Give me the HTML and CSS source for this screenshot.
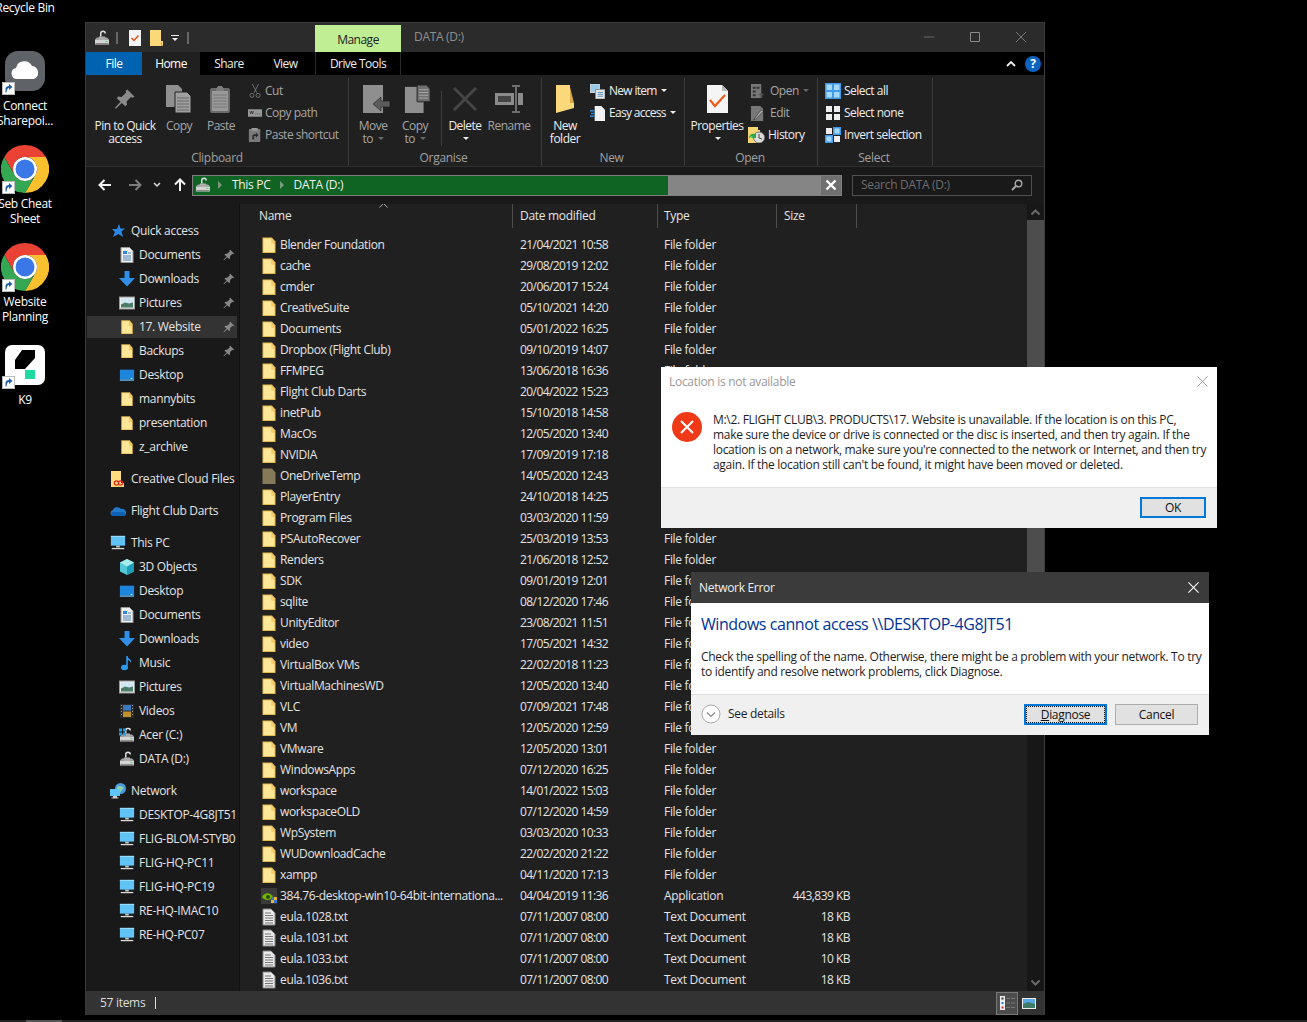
FILE: index.html
```html
<!DOCTYPE html>
<html lang="en">
<head>
<meta charset="utf-8">
<title>DATA (D:)</title>
<link rel="stylesheet" href="styles.css">
</head>
<body>
<svg class="defs" aria-hidden="true">
  <symbol id="folder" viewBox="0 0 14 18"><path d="M.5 1.500h9.500l3.500 4v11.500H.5z" fill="#e6b94f"/><path d="M1.500 2.500h8v5h3v8.500H1.500z" fill="#fee797"/><path d="M10 3l2.500 3v1H10z" fill="#f3cf72"/></symbol>
  <symbol id="folder-dim" viewBox="0 0 14 18"><path d="M.5 1.500h9.500l3.500 4v11.500H.5z" fill="#85795a"/></symbol>
  <symbol id="txt" viewBox="0 0 14 18"><path d="M1 1h8l4 4v12H1z" fill="#e8e8e8" stroke="#888"/><path d="M3 5h6M3 7.500h8M3 10h8M3 12.500h8M3 15h8" stroke="#777"/></symbol>
  <symbol id="monitor" viewBox="0 0 18 16"><rect x="1" y="0" width="16" height="11" fill="#5fc3f5"/><rect x="1" y="0" width="16" height="1" fill="#a9e2fb"/><path d="M7 11h4v2H7z" fill="#c8c8c8"/><path d="M2 13.500h14V15H2z" fill="#dcdcdc"/></symbol>
  <symbol id="desk" viewBox="0 0 18 14"><rect x="1" y="1" width="16" height="11" fill="#1d86dc"/><path d="M1 12h16v1.500H1z" fill="#67b8f3"/><path d="M13 10.500h2v1h-2z" fill="#d7eefc"/></symbol>
  <symbol id="pin" viewBox="0 0 24 24"><path d="M14.500 1.500l8 8-2.500 1-1.500-.8-4.700 5 .4 3.700-2 1.600-3.700-3.700-6.500 6.200-1-1 6.200-6.500L3 11.300l1.600-2 3.700.4 5-4.700-.8-1.500z"/></symbol>
  <symbol id="docs" viewBox="0 0 14 16"><path d="M1 .5h8.500L13 4v11.500H1z" fill="#eee" stroke="#999"/><path d="M3 4h4v3H3z" fill="#2b88d8"/><path d="M8 6h3M3 9h8M3 11h8M3 13h8" stroke="#4a86b8"/></symbol>
  <symbol id="down" viewBox="0 0 16 16"><path d="M5.500 0h5v7H16l-8 8.500L0 7h5.500z" fill="#2f8fe6"/></symbol>
  <symbol id="pics" viewBox="0 0 16 13"><rect x=".5" y=".5" width="15" height="12" fill="#ececec" stroke="#999"/><rect x="2" y="2" width="12" height="9" fill="#cfe6f5"/><path d="M2 8l4-2 4 1 4-1v5H2z" fill="#4d7d66"/></symbol>
  <symbol id="drive" viewBox="0 0 16 15"><path d="M6 6V3a3 3 0 0 1 6 0h-1.500a1.500 1.500 0 0 0-3 0v3z" fill="#ddd"/><path d="M5 6h6v3H5z" fill="#b9b9b9"/><path d="M1 9l2-2h10l2 2z" fill="#a9a9a9"/><rect x="1" y="9" width="14" height="5" fill="#d4d4d4"/><rect x="1.500" y="12.500" width="13" height="1" fill="#888"/><rect x="11.500" y="10.500" width="2" height="1" fill="#55d36b"/></symbol>
  <symbol id="short" viewBox="0 0 13 13"><rect x=".5" y=".5" width="12" height="12" fill="#fff" stroke="#bbb"/><path d="M3.500 10.500V7c0-2 1.500-3 3.500-3V2l3.500 3L7 8V6C5.500 6 5 7 4.500 10.500z" fill="#1f5fa8"/></symbol>
  <symbol id="chrome" viewBox="0 0 48 48"><path d="M24 0A24 24 0 0 1 44.800 12H24A12 12 0 0 0 13.600 30L3.200 12A24 24 0 0 1 24 0z" fill="#ea4335"/><path d="M44.800 12A24 24 0 0 1 24 48L34.400 30A12 12 0 0 0 24 12z" fill="#fbc02d"/><path d="M3.200 12L13.600 30A12 12 0 0 0 34.400 30L24 48A24 24 0 0 1 3.200 12z" fill="#34a853"/><circle cx="24" cy="24" r="12" fill="#fff"/><circle cx="24" cy="24" r="9.500" fill="#3b78e7"/></symbol>
  <symbol id="sel" viewBox="0 0 16 16"><rect width="16" height="16" fill="#3f9be8"/><rect x="1.500" y="1.500" width="5.500" height="5.500" fill="#a6d8fb"/><rect x="9" y="1.500" width="5.500" height="5.500" fill="#a6d8fb"/><rect x="1.500" y="9" width="5.500" height="5.500" fill="#a6d8fb"/><rect x="9" y="9" width="5.500" height="5.500" fill="#a6d8fb"/></symbol>
</svg>

<main class="desktop">
  <div class="shortcut shortcut-recycle"><span>Recycle Bin</span></div>
  <div class="shortcut shortcut-connect">
    <div class="app">
      <svg class="app-icon" viewBox="0 0 40 40"><rect width="40" height="40" rx="13" fill="#5f6368"/><path d="M12 28a5.500 5.500 0 0 1-1-10.900A8.500 8.500 0 0 1 27 15a6.800 6.800 0 0 1 2 13z" fill="#fff"/></svg>
      <svg class="short-badge"><use href="#short"/></svg>
    </div>
    <span>Connect<br>Sharepoi...</span>
  </div>
  <div class="shortcut shortcut-seb">
    <div class="app app-wide"><svg class="app-icon-wide"><use href="#chrome"/></svg><svg class="short-badge"><use href="#short"/></svg></div>
    <span>Seb Cheat<br>Sheet</span>
  </div>
  <div class="shortcut shortcut-web">
    <div class="app app-wide"><svg class="app-icon-wide"><use href="#chrome"/></svg><svg class="short-badge"><use href="#short"/></svg></div>
    <span>Website<br>Planning</span>
  </div>
  <div class="shortcut shortcut-k9">
    <div class="app">
      <svg class="app-icon" viewBox="0 0 40 40"><rect width="40" height="40" rx="7" fill="#fff"/><path d="M10 15L17 5h13v8L20 24H10z" fill="#000"/><rect x="20" y="25" width="10" height="9" fill="#1ed9a0"/></svg>
      <svg class="short-badge"><use href="#short"/></svg>
    </div>
    <span>K9</span>
  </div>

  <section class="window">
    <header class="titlebar">
      <div class="qat">
        <svg class="ic16"><use href="#drive"/></svg>
        <i class="qat-sep"></i>
        <svg class="qat-note" viewBox="0 0 12 16"><path d="M0 0h12v16H0z" fill="#f4f4f4"/><path d="M2.500 8l2.500 2.500 4.500-5" fill="none" stroke="#e2531c" stroke-width="1.500"/></svg>
        <svg class="qat-folder" viewBox="0 0 13 16"><path d="M0 0h11v11h2v5H0z" fill="#fcd978"/><path d="M11 11l2 5h-2z" fill="#d7a53a"/></svg>
        <svg class="qat-drop" viewBox="0 0 8 8"><path d="M0 1h8v1H0zM1 4h6L4 7z" fill="#eee"/></svg>
        <i class="qat-sep qat-sep-end"></i>
      </div>
      <div class="manage">Manage</div>
      <div class="win-title">DATA (D:)</div>
      <div class="win-ctrls">
        <span class="ctrl"><svg class="ctrl-ic" viewBox="0 0 10 10"><path d="M0 5h10" stroke="#666"/></svg></span>
        <span class="ctrl"><svg class="ctrl-ic" viewBox="0 0 10 10"><path d="M.5.5h9v9h-9z" fill="none" stroke="#8a8a8a"/></svg></span>
        <span class="ctrl"><svg class="ctrl-ic" viewBox="0 0 10 10"><path d="M0 0l10 10M10 0L0 10" stroke="#777"/></svg></span>
      </div>
    </header>

    <nav class="tabs">
      <span class="tab tab-file">File</span>
      <span class="tab tab-home">Home</span>
      <span class="tab tab-share">Share</span>
      <span class="tab tab-view">View</span>
      <span class="tab tab-drive">Drive Tools</span>
      <svg class="tab-up" viewBox="0 0 10 6"><path d="M1 5l4-4 4 4" fill="none" stroke="#eee" stroke-width="1.800"/></svg>
      <span class="help">?</span>
    </nav>

    <div class="ribbon">
      <div class="rg rg-clip">
        <div class="rg-body">
          <div class="big big-pin"><span class="big-ic"><svg class="ic-pin"><use href="#pin"/></svg></span><span class="lit">Pin to Quick<br>access</span></div>
          <div class="big big-copy"><span class="big-ic"><svg class="ic-28" viewBox="0 0 26 28"><path d="M0 0h12l4 4v18H0z" fill="#8f8f8f"/><path d="M9 7h12l4 4v17H9z" fill="#a0a0a0" stroke="#202020"/><path d="M11 13h12M11 16h12M11 19h12M11 22h12M11 25h12" stroke="#666"/></svg></span><span>Copy</span></div>
          <div class="big big-paste"><span class="big-ic"><svg class="ic-28" viewBox="0 0 22 28"><rect y="3" width="20" height="25" rx="2" fill="#6a6a6a"/><rect x="2" y="6" width="16" height="20" fill="#999"/><path d="M3 10h14M3 13h14M3 16h14M3 19h14M3 22h14" stroke="#777"/><path d="M6 4l2-3h4l2 3v2H6z" fill="#7d7d7d"/></svg></span><span>Paste</span></div>
          <div class="smalls smalls-clip">
            <div class="small"><svg class="ic14" viewBox="0 0 14 16"><path d="M4 0l5 10M11 0L6 10" stroke="#777" fill="none"/><circle cx="3.500" cy="13" r="2.300" fill="none" stroke="#777"/><circle cx="10.500" cy="13" r="2.300" fill="none" stroke="#777"/></svg><span>Cut</span></div>
            <div class="small"><svg class="ic14" viewBox="0 0 15 10"><rect y="1" width="15" height="8" fill="#999"/><path d="M2 3l1 3 1-3 1 3 1-3M8 6h1M10 6h1M12 6h1" stroke="#333" fill="none" stroke-width=".8"/></svg><span>Copy path</span></div>
            <div class="small"><svg class="ic14" viewBox="0 0 14 16"><rect y="1" width="13" height="15" rx="1" fill="#7a7a7a"/><path d="M3 0h7v3H3z" fill="#999"/><path d="M4 13V9c0-1 1-2 2-2h2V5l3 3-3 3V9H6v4z" fill="#2a2a2a"/></svg><span>Paste shortcut</span></div>
          </div>
        </div>
        <div class="rg-label">Clipboard</div>
      </div>

      <div class="rg rg-org">
        <div class="rg-body">
          <div class="big big-move"><span class="big-ic"><svg class="ic-28" viewBox="0 0 28 28"><path d="M0 0h20v28H0z" fill="#8f8f8f"/><path d="M10 19l8-7v4h9v6h-9v4z" fill="#5b5b5b" stroke="#202020" stroke-width=".6"/></svg></span><span>Move<br>to <i class="caret caret-dim"></i></span></div>
          <div class="big big-copyto"><span class="big-ic"><svg class="ic-28" viewBox="0 0 28 30"><path d="M0 2h20v28H0z" fill="#8f8f8f"/><path d="M13 0h10l4 4v14H13z" fill="#6f6f6f" stroke="#202020"/><path d="M15 5h10M15 8h10M15 11h10M15 14h10" stroke="#aaa"/></svg></span><span>Copy<br>to <i class="caret caret-dim"></i></span></div>
          <i class="rg-inner-sep"></i>
          <div class="big big-del"><span class="big-ic"><svg class="ic-del" viewBox="0 0 24 24"><path d="M1 1l22 22M23 1L1 23" stroke="#454545" stroke-width="3"/></svg></span><span class="lit">Delete<br><i class="caret"></i></span></div>
          <div class="big big-ren"><span class="big-ic"><svg class="ic-ren" viewBox="0 0 28 28"><path d="M0 8h28v12H0z" fill="#8c8c8c"/><rect x="3" y="11" width="13" height="6" fill="#444"/><path d="M21 2v24" stroke="#202020" stroke-width="4"/><path d="M21 2v24M17 1h8M17 27h8" stroke="#888" stroke-width="1.500"/></svg></span><span>Rename</span></div>
        </div>
        <div class="rg-label">Organise</div>
      </div>

      <div class="rg rg-new">
        <div class="rg-body">
          <div class="big big-nf"><span class="big-ic"><svg class="ic-nf" viewBox="0 0 18 28"><path d="M0 0h14v18h4v5L0 28z" fill="#fbd97a"/><path d="M14 2v16h4z" fill="#d8aa47"/></svg></span><span class="lit">New<br>folder</span></div>
          <div class="smalls smalls-new">
            <div class="small small-lit"><svg class="ic15" viewBox="0 0 16 16"><rect width="10" height="9" fill="#9cc9e8" stroke="#ddd"/><rect x="6" y="6" width="10" height="10" fill="#eee" stroke="#888"/><path d="M8 9h6M8 11h6M8 13h6" stroke="#4a86b8"/></svg><span>New item <i class="caret"></i></span></div>
            <div class="small small-lit"><svg class="ic15" viewBox="0 0 16 16"><path d="M5 0h7l4 4v12H5z" fill="#f2f2f2"/><path d="M0 5h5M1 8h4M0 11h5" stroke="#2b88d8" stroke-width="1.500"/></svg><span>Easy access <i class="caret"></i></span></div>
          </div>
        </div>
        <div class="rg-label">New</div>
      </div>

      <div class="rg rg-open">
        <div class="rg-body">
          <div class="big big-prop"><span class="big-ic"><svg class="ic-prop" viewBox="0 0 21 28"><path d="M0 0h15l6 6v22H0z" fill="#f5f5f5"/><path d="M15 0l6 6h-6z" fill="#bbb"/><path d="M3 15l5 6 10-11" fill="none" stroke="#ea5a1e" stroke-width="2.200"/></svg></span><span class="lit">Properties<br><i class="caret"></i></span></div>
          <div class="smalls smalls-open">
            <div class="small"><svg class="ic15" viewBox="0 0 16 16"><rect x="1" width="11" height="15" fill="#777"/><path d="M3 3h3v2H3zM7 3h3v2H7zM3 7h3v2H3zM3 11h3v2H3z" fill="#333"/><path d="M9 12l3-3 3 3h-2v3h-2v-3z" fill="#555"/></svg><span>Open <i class="caret caret-dim"></i></span></div>
            <div class="small"><svg class="ic15" viewBox="0 0 16 16"><path d="M1 0h10l3 3v13H1z" fill="#777"/><path d="M12 4L5 13l-1 2 2-1 8-8z" fill="#aaa" stroke="#202020" stroke-width=".6"/></svg><span>Edit</span></div>
            <div class="small small-lit"><svg class="ic-hist" viewBox="0 0 17 16"><path d="M0 0h10v3h2v13H0z" fill="#f7d774"/><circle cx="11" cy="10.500" r="5.500" fill="#ddd" stroke="#777"/><path d="M11 7v4l3 1" stroke="#444" fill="none"/><path d="M1 10c1-3 4-4 6-3l1-1v5H3l1.500-1.500c-1-.5-2 0-2.500 2z" fill="#2ea84a"/></svg><span>History</span></div>
          </div>
        </div>
        <div class="rg-label">Open</div>
      </div>

      <div class="rg rg-sel">
        <div class="rg-body">
          <div class="smalls smalls-sel">
            <div class="small small-lit"><svg class="ic16"><use href="#sel"/></svg><span>Select all</span></div>
            <div class="small small-lit"><svg class="ic16" viewBox="0 0 16 16"><path d="M1 1h6v6H1zM9 1h6v6H9zM1 9h6v6H1zM9 9h6v6H9z" fill="#eee"/></svg><span>Select none</span></div>
            <div class="small small-lit"><svg class="ic16" viewBox="0 0 16 16"><path d="M1 1h6v6H1zM9 9h6v6H9z" fill="#eee"/><rect x="8" width="8" height="8" fill="#3f9be8"/><rect x="9.500" y="1.500" width="5" height="5" fill="#a6d8fb"/><rect y="8" width="8" height="8" fill="#3f9be8"/><rect x="1.500" y="9.500" width="5" height="5" fill="#a6d8fb"/></svg><span>Invert selection</span></div>
          </div>
        </div>
        <div class="rg-label">Select</div>
      </div>
    </div>

    <div class="addrrow">
      <svg class="nav-back" viewBox="0 0 14 12"><path d="M13 6H2M6.500 1L1.500 6l5 5" fill="none" stroke="#f2f2f2" stroke-width="2"/></svg>
      <svg class="nav-fwd" viewBox="0 0 14 12"><path d="M1 6h11M7.500 1l5 5-5 5" fill="none" stroke="#7d7d7d" stroke-width="2"/></svg>
      <svg class="nav-drop" viewBox="0 0 8 6"><path d="M1 1l3 3 3-3" fill="none" stroke="#ddd" stroke-width="1.500"/></svg>
      <svg class="nav-up" viewBox="0 0 12 14"><path d="M6 13V2M1 6.500l5-5 5 5" fill="none" stroke="#f2f2f2" stroke-width="2"/></svg>
      <div class="addr">
        <div class="addr-fill">
          <svg class="ic16"><use href="#drive"/></svg>
          <i class="crumb-sep"></i><span class="crumb">This PC</span>
          <i class="crumb-sep"></i><span class="crumb">DATA (D:)</span>
        </div>
        <div class="addr-rest"></div>
        <div class="addr-x"><svg class="addr-x-ic" viewBox="0 0 12 12"><path d="M1.500 1.500l9 9M10.500 1.500l-9 9" stroke="#fff" stroke-width="2.400"/></svg></div>
      </div>
      <div class="search"><span>Search DATA (D:)</span><svg class="search-ic" viewBox="0 0 12 12"><circle cx="7.500" cy="4.500" r="3.300" fill="none" stroke="#aaa" stroke-width="1.400"/><path d="M5 7l-4 4" stroke="#aaa" stroke-width="1.800"/></svg></div>
    </div>

    <div class="main">
      <aside class="side">
        <div class="sgroup">
          <div class="srow"><svg class="sic-root" viewBox="0 0 16 16"><path d="M9 1l1.500 4.500H15L11.500 8.500 13 14 8.500 11 3 14l2-5L2 6h5z" fill="#2b88e6"/></svg><span>Quick access</span></div>
          <div class="srow srow-c"><svg class="sic"><use href="#docs"/></svg><span>Documents</span><svg class="spin"><use href="#pin"/></svg></div>
          <div class="srow srow-c"><svg class="sic"><use href="#down"/></svg><span>Downloads</span><svg class="spin"><use href="#pin"/></svg></div>
          <div class="srow srow-c"><svg class="sic"><use href="#pics"/></svg><span>Pictures</span><svg class="spin"><use href="#pin"/></svg></div>
          <div class="srow srow-c srow-sel"><svg class="sic"><use href="#folder"/></svg><span>17. Website</span><svg class="spin"><use href="#pin"/></svg></div>
          <div class="srow srow-c"><svg class="sic"><use href="#folder"/></svg><span>Backups</span><svg class="spin"><use href="#pin"/></svg></div>
          <div class="srow srow-c"><svg class="sic"><use href="#desk"/></svg><span>Desktop</span></div>
          <div class="srow srow-c"><svg class="sic"><use href="#folder"/></svg><span>mannybits</span></div>
          <div class="srow srow-c"><svg class="sic"><use href="#folder"/></svg><span>presentation</span></div>
          <div class="srow srow-c"><svg class="sic"><use href="#folder"/></svg><span>z_archive</span></div>
        </div>
        <div class="sgroup">
          <div class="srow"><svg class="sic-root" viewBox="0 0 16 16"><path d="M1 0h10v12h3v4H1z" fill="#fcdc7e"/><circle cx="6.500" cy="12" r="2.200" fill="none" stroke="#e0261b" stroke-width="1.200"/><circle cx="10.500" cy="12" r="2.200" fill="none" stroke="#e0261b" stroke-width="1.200"/></svg><span>Creative Cloud Files</span></div>
        </div>
        <div class="sgroup">
          <div class="srow"><svg class="sic-root" viewBox="0 0 16 12"><path d="M3 11a3 3 0 0 1-.5-5.800A5 5 0 0 1 11 4a3.500 3.500 0 0 1 2.500 7z" fill="#2478c9"/><path d="M3 11a2 2 0 0 1 0-4h10a2 2 0 0 1 0 4z" fill="#0f5fb5"/></svg><span>Flight Club Darts</span></div>
        </div>
        <div class="sgroup">
          <div class="srow"><svg class="sic-root"><use href="#monitor"/></svg><span>This PC</span></div>
          <div class="srow srow-c"><svg class="sic" viewBox="0 0 16 16"><path d="M8 0l7 3.500v9L8 16l-7-3.500v-9z" fill="#52c8d8"/><path d="M8 7.500L15 3.500v9L8 16z" fill="#1b9db8"/><path d="M8 0l7 3.500-7 4-7-4z" fill="#a8ebef"/></svg><span>3D Objects</span></div>
          <div class="srow srow-c"><svg class="sic"><use href="#desk"/></svg><span>Desktop</span></div>
          <div class="srow srow-c"><svg class="sic"><use href="#docs"/></svg><span>Documents</span></div>
          <div class="srow srow-c"><svg class="sic"><use href="#down"/></svg><span>Downloads</span></div>
          <div class="srow srow-c"><svg class="sic" viewBox="0 0 16 16"><path d="M8 1v10" stroke="#2b9bea" stroke-width="1.600"/><path d="M8 1c1 3 5 3 4 7-.5-2-2-3-4-3z" fill="#2b9bea"/><ellipse cx="5.500" cy="12.500" rx="3.500" ry="2.800" fill="#2b9bea"/></svg><span>Music</span></div>
          <div class="srow srow-c"><svg class="sic"><use href="#pics"/></svg><span>Pictures</span></div>
          <div class="srow srow-c"><svg class="sic" viewBox="0 0 16 16"><rect x="1" y="1" width="14" height="14" fill="#2b2b2b"/><rect x="4" y="2" width="8" height="5.500" fill="#3a78c0"/><rect x="4" y="8.500" width="8" height="5.500" fill="#c0922e"/><path d="M2 2h1v1H2zM2 5h1v1H2zM2 8h1v1H2zM2 11h1v1H2zM13 2h1v1h-1zM13 5h1v1h-1zM13 8h1v1h-1zM13 11h1v1h-1z" fill="#999"/></svg><span>Videos</span></div>
          <div class="srow srow-c"><svg class="sic" viewBox="0 0 16 15"><use href="#drive"/><path d="M0 1h3v3H0zM4 1h3v3H4zM0 5h3v3H0zM4 5h3v3H4z" fill="#17a0e8"/></svg><span>Acer (C:)</span></div>
          <div class="srow srow-c"><svg class="sic"><use href="#drive"/></svg><span>DATA (D:)</span></div>
        </div>
        <div class="sgroup">
          <div class="srow"><svg class="sic-root" viewBox="0 0 16 16"><circle cx="10.500" cy="5.500" r="5.500" fill="#4a9bdc"/><path d="M7 4c2-2 5-1 7 1-2 1-3 3-4 5-2 0-4-3-3-6z" fill="#8fd0a8"/><rect x="0" y="6" width="10" height="7" fill="#5fc3f5"/><path d="M3 13h4v1.500H3zM1.500 14.500h7v1h-7z" fill="#ccc"/></svg><span>Network</span></div>
          <div class="srow srow-c"><svg class="sic"><use href="#monitor"/></svg><span>DESKTOP-4G8JT51</span></div>
          <div class="srow srow-c"><svg class="sic"><use href="#monitor"/></svg><span>FLIG-BLOM-STYB0</span></div>
          <div class="srow srow-c"><svg class="sic"><use href="#monitor"/></svg><span>FLIG-HQ-PC11</span></div>
          <div class="srow srow-c"><svg class="sic"><use href="#monitor"/></svg><span>FLIG-HQ-PC19</span></div>
          <div class="srow srow-c"><svg class="sic"><use href="#monitor"/></svg><span>RE-HQ-IMAC10</span></div>
          <div class="srow srow-c"><svg class="sic"><use href="#monitor"/></svg><span>RE-HQ-PC07</span></div>
        </div>
      </aside>

      <section class="list">
        <div class="lhead">
          <div class="lh lh-name">Name<svg class="sort" viewBox="0 0 9 5"><path d="M.5 4.500l4-4 4 4" fill="none" stroke="#aaa"/></svg></div>
          <div class="lh lh-date">Date modified</div>
          <div class="lh lh-type">Type</div>
          <div class="lh lh-size">Size</div>
        </div>
        <div class="rows">
          <div class="row"><svg class="ric"><use href="#folder"/></svg><span>Blender Foundation</span><span>21/04/2021 10:58</span><span>File folder</span><span></span></div>
          <div class="row"><svg class="ric"><use href="#folder"/></svg><span>cache</span><span>29/08/2019 12:02</span><span>File folder</span><span></span></div>
          <div class="row"><svg class="ric"><use href="#folder"/></svg><span>cmder</span><span>20/06/2017 15:24</span><span>File folder</span><span></span></div>
          <div class="row"><svg class="ric"><use href="#folder"/></svg><span>CreativeSuite</span><span>05/10/2021 14:20</span><span>File folder</span><span></span></div>
          <div class="row"><svg class="ric"><use href="#folder"/></svg><span>Documents</span><span>05/01/2022 16:25</span><span>File folder</span><span></span></div>
          <div class="row"><svg class="ric"><use href="#folder"/></svg><span>Dropbox (Flight Club)</span><span>09/10/2019 14:07</span><span>File folder</span><span></span></div>
          <div class="row"><svg class="ric"><use href="#folder"/></svg><span>FFMPEG</span><span>13/06/2018 16:36</span><span>File folder</span><span></span></div>
          <div class="row"><svg class="ric"><use href="#folder"/></svg><span>Flight Club Darts</span><span>20/04/2022 15:23</span><span>File folder</span><span></span></div>
          <div class="row"><svg class="ric"><use href="#folder"/></svg><span>inetPub</span><span>15/10/2018 14:58</span><span>File folder</span><span></span></div>
          <div class="row"><svg class="ric"><use href="#folder"/></svg><span>MacOs</span><span>12/05/2020 13:40</span><span>File folder</span><span></span></div>
          <div class="row"><svg class="ric"><use href="#folder"/></svg><span>NVIDIA</span><span>17/09/2019 17:18</span><span>File folder</span><span></span></div>
          <div class="row"><svg class="ric"><use href="#folder-dim"/></svg><span>OneDriveTemp</span><span>14/05/2020 12:43</span><span>File folder</span><span></span></div>
          <div class="row"><svg class="ric"><use href="#folder"/></svg><span>PlayerEntry</span><span>24/10/2018 14:25</span><span>File folder</span><span></span></div>
          <div class="row"><svg class="ric"><use href="#folder"/></svg><span>Program Files</span><span>03/03/2020 11:59</span><span>File folder</span><span></span></div>
          <div class="row"><svg class="ric"><use href="#folder"/></svg><span>PSAutoRecover</span><span>25/03/2019 13:53</span><span>File folder</span><span></span></div>
          <div class="row"><svg class="ric"><use href="#folder"/></svg><span>Renders</span><span>21/06/2018 12:52</span><span>File folder</span><span></span></div>
          <div class="row"><svg class="ric"><use href="#folder"/></svg><span>SDK</span><span>09/01/2019 12:01</span><span>File folder</span><span></span></div>
          <div class="row"><svg class="ric"><use href="#folder"/></svg><span>sqlite</span><span>08/12/2020 17:46</span><span>File folder</span><span></span></div>
          <div class="row"><svg class="ric"><use href="#folder"/></svg><span>UnityEditor</span><span>23/08/2021 11:51</span><span>File folder</span><span></span></div>
          <div class="row"><svg class="ric"><use href="#folder"/></svg><span>video</span><span>17/05/2021 14:32</span><span>File folder</span><span></span></div>
          <div class="row"><svg class="ric"><use href="#folder"/></svg><span>VirtualBox VMs</span><span>22/02/2018 11:23</span><span>File folder</span><span></span></div>
          <div class="row"><svg class="ric"><use href="#folder"/></svg><span>VirtualMachinesWD</span><span>12/05/2020 13:40</span><span>File folder</span><span></span></div>
          <div class="row"><svg class="ric"><use href="#folder"/></svg><span>VLC</span><span>07/09/2021 17:48</span><span>File folder</span><span></span></div>
          <div class="row"><svg class="ric"><use href="#folder"/></svg><span>VM</span><span>12/05/2020 12:59</span><span>File folder</span><span></span></div>
          <div class="row"><svg class="ric"><use href="#folder"/></svg><span>VMware</span><span>12/05/2020 13:01</span><span>File folder</span><span></span></div>
          <div class="row"><svg class="ric"><use href="#folder"/></svg><span>WindowsApps</span><span>07/12/2020 16:25</span><span>File folder</span><span></span></div>
          <div class="row"><svg class="ric"><use href="#folder"/></svg><span>workspace</span><span>14/01/2022 15:03</span><span>File folder</span><span></span></div>
          <div class="row"><svg class="ric"><use href="#folder"/></svg><span>workspaceOLD</span><span>07/12/2020 14:59</span><span>File folder</span><span></span></div>
          <div class="row"><svg class="ric"><use href="#folder"/></svg><span>WpSystem</span><span>03/03/2020 10:33</span><span>File folder</span><span></span></div>
          <div class="row"><svg class="ric"><use href="#folder"/></svg><span>WUDownloadCache</span><span>22/02/2020 21:22</span><span>File folder</span><span></span></div>
          <div class="row"><svg class="ric"><use href="#folder"/></svg><span>xampp</span><span>04/11/2020 17:13</span><span>File folder</span><span></span></div>
          <div class="row"><svg class="ric ric-app" viewBox="0 0 16 16"><rect width="16" height="16" fill="#3a3a3a"/><path d="M1 9c3-5 8-5 11 0-3 4-8 4-11 0z" fill="#76b900"/><circle cx="7" cy="9" r="2" fill="#2a4a10"/><rect x="10" y="9" width="3" height="3" fill="#2b78d4"/><rect x="13" y="9" width="3" height="3" fill="#f0b429"/><rect x="10" y="12" width="3" height="3" fill="#f0b429"/><rect x="13" y="12" width="3" height="3" fill="#2b78d4"/></svg><span>384.76-desktop-win10-64bit-internationa...</span><span>04/04/2019 11:36</span><span>Application</span><span>443,839 KB</span></div>
          <div class="row"><svg class="ric"><use href="#txt"/></svg><span>eula.1028.txt</span><span>07/11/2007 08:00</span><span>Text Document</span><span>18 KB</span></div>
          <div class="row"><svg class="ric"><use href="#txt"/></svg><span>eula.1031.txt</span><span>07/11/2007 08:00</span><span>Text Document</span><span>18 KB</span></div>
          <div class="row"><svg class="ric"><use href="#txt"/></svg><span>eula.1033.txt</span><span>07/11/2007 08:00</span><span>Text Document</span><span>10 KB</span></div>
          <div class="row"><svg class="ric"><use href="#txt"/></svg><span>eula.1036.txt</span><span>07/11/2007 08:00</span><span>Text Document</span><span>18 KB</span></div>
        </div>
      </section>

      <div class="scroll">
        <svg class="scroll-arrow" viewBox="0 0 9 7"><path d="M.5 5.500l4-4 4 4" fill="none" stroke="#6a6a6a" stroke-width="2"/></svg>
        <div class="thumb"></div>
        <svg class="scroll-arrow scroll-arrow-end" viewBox="0 0 9 7"><path d="M.5 1.500l4 4 4-4" fill="none" stroke="#6a6a6a" stroke-width="2"/></svg>
      </div>
    </div>

    <footer class="status">
      <span>57 items</span><i class="status-bar"></i>
      <div class="view-btns">
        <span class="view-btn view-btn-on"><svg class="view-ic" viewBox="0 0 16 16"><rect x="1" y="1" width="5" height="14" fill="#eee"/><rect x="2.500" y="2.500" width="2" height="2" fill="#333"/><rect x="2.500" y="7" width="2" height="2" fill="#2b78d4"/><rect x="2.500" y="11.500" width="2" height="2" fill="#d42b2b"/><path d="M7 3.500h4M12 3.500h4M7 8h4M12 8h4M7 12.500h4M12 12.500h4" stroke="#777"/></svg></span>
        <span class="view-btn"><svg class="view-pic" viewBox="0 0 14 11"><rect width="14" height="11" fill="#eee"/><rect x="1" y="1" width="12" height="9" fill="#5aa8e8"/><path d="M1 6l5-2 7 2v4H1z" fill="#3f7a66"/></svg></span>
      </div>
    </footer>
  </section>

  <section class="dlg dlg-loc">
    <div class="dlg-loc-title"><span>Location is not available</span><svg class="x12" viewBox="0 0 12 12"><path d="M.5.500l11 11M11.500.500l-11 11" stroke="#999"/></svg></div>
    <div class="dlg-loc-body">
      <svg class="err" viewBox="0 0 30 30"><circle cx="15" cy="15" r="15" fill="#f03a17"/><path d="M9 9l12 12M21 9L9 21" stroke="#fff" stroke-width="2"/></svg>
      <p>M:\2. FLIGHT CLUB\3. PRODUCTS\17. Website is unavailable. If the location is on this PC,<br>make sure the device or drive is connected or the disc is inserted, and then try again. If the<br>location is on a network, make sure you're connected to the network or Internet, and then try<br>again. If the location still can't be found, it might have been moved or deleted.</p>
    </div>
    <div class="dlg-foot dlg-loc-foot"><span class="btn btn-focus">OK</span></div>
  </section>

  <section class="dlg dlg-net">
    <div class="dlg-net-title"><span>Network Error</span><svg class="x12" viewBox="0 0 12 12"><path d="M.5.500l11 11M11.500.500l-11 11" stroke="#fff" stroke-width="1.200"/></svg></div>
    <div class="dlg-net-body">
      <h2>Windows cannot access \\DESKTOP-4G8JT51</h2>
      <p>Check the spelling of the name. Otherwise, there might be a problem with your network. To try<br>to identify and resolve network problems, click Diagnose.</p>
    </div>
    <div class="dlg-foot dlg-net-foot">
      <svg class="details-ic" viewBox="0 0 20 20"><circle cx="10" cy="10" r="9" fill="#fff" stroke="#aaa"/><path d="M6 8.500l4 4 4-4" fill="none" stroke="#888" stroke-width="1.200"/></svg>
      <span class="details">See details</span>
      <span class="btn btn-focus btn-wide"><span class="btn-dots"><u>D</u>iagnose</span></span>
      <span class="btn btn-wide">Cancel</span>
    </div>
  </section>

  <div class="taskstrip"><i></i></div>
</main>
</body>
</html>
```
FILE: styles.css
```css
* { box-sizing: border-box; }
html, body { margin: 0; height: 100%; background: #000; overflow: hidden; }
body { font: 12px/16px "Open Sans", "Noto Sans", sans-serif; letter-spacing: -.3px; color: #e4e4e4; }
i { font-style: normal; display: block; }
svg { display: block; flex: none; }
.defs { position: absolute; width: 0; height: 0; }
.desktop { position: relative; width: 1307px; height: 1022px; overflow: hidden; }

/* desktop shortcuts */
.shortcut { position: absolute; left: -14px; width: 78px; display: flex; flex-direction: column; align-items: center; color: #fff; line-height: 15px; text-align: center; white-space: nowrap; }
.shortcut-recycle { top: 0; }
.shortcut-connect { top: 51px; }
.shortcut-seb { top: 145px; }
.shortcut-web { top: 243px; }
.shortcut-k9 { top: 345px; }
.app { position: relative; width: 40px; height: 47px; }
.app-wide { width: 48px; height: 51px; }
.app-icon { width: 40px; height: 40px; }
.app-icon-wide { width: 48px; height: 48px; }
.short-badge { position: absolute; left: -3px; top: 31px; width: 13px; height: 13px; }
.app-wide .short-badge { left: 1px; top: 36px; }

/* window */
.window { position: absolute; left: 85px; top: 22px; width: 960px; height: 993px; display: flex; flex-direction: column; background: #202020; border-left: 1px solid #3a3a3a; border-right: 1px solid #3e3e3e; }
.titlebar { height: 30px; flex: none; display: flex; align-items: flex-end; background: #2b2b2b; border-top: 1px solid #3a3a3a; }
.qat { width: 229px; height: 29px; display: flex; align-items: center; padding-left: 8px; }
.ic16 { width: 16px; height: 16px; }
.qat-sep { width: 2px; height: 12px; background: #666; margin-left: 6px; }
.qat-note { width: 12px; height: 16px; margin-left: 11px; }
.qat-folder { width: 13px; height: 16px; margin-left: 9px; }
.qat-drop { width: 8px; height: 8px; margin-left: 8px; }
.qat-sep-end { margin-left: 8px; }
.manage { width: 86px; height: 27px; background: #bfee95; color: #222; text-align: center; line-height: 29px; letter-spacing: -.5px; }
.win-title { margin-left: 13px; align-self: center; color: #8f8f8f; padding-bottom: 2px; }
.win-ctrls { margin-left: auto; height: 29px; display: flex; }
.ctrl { width: 46px; display: flex; align-items: center; justify-content: center; padding-bottom: 2px; }
.ctrl-ic { width: 10px; height: 10px; }

.tabs { height: 23px; flex: none; display: flex; align-items: center; background: #000; }
.tab { height: 23px; line-height: 24px; text-align: center; color: #eee; letter-spacing: -.55px; }
.tab-file { width: 56px; background: #0063b1; color: #fff; }
.tab-home { width: 58px; background: #202020; color: #fff; }
.tab-share { width: 58px; }
.tab-view { width: 55px; }
.tab-drive { width: 86px; margin-left: 2px; border: 1px solid #2a2a2a; border-width: 0 1px; }
.tab-up { width: 10px; height: 6px; margin-left: auto; }
.help { width: 16px; height: 16px; margin: 0 3px 0 9px; border-radius: 50%; background: #0a64c0; color: #fff; font-weight: 700; text-align: center; line-height: 16px; }

/* ribbon */
.ribbon { height: 92px; flex: none; display: flex; align-items: flex-start; background: #202020; border-bottom: 1px solid #2e2e2e; letter-spacing: -.5px; }
.rg { height: 88px; margin-top: 3px; display: flex; flex-direction: column; border-right: 1px solid #3c3c3c; color: #a6a6a6; }
.rg-clip { width: 263px; padding-left: 8px; }
.rg-org { width: 193px; padding-left: 4px; }
.rg-new { width: 143px; padding-left: 3px; }
.rg-open { width: 133px; padding-left: 6px; }
.rg-sel { width: 115px; padding-left: 7px; }
.rg-body { height: 71px; flex: none; display: flex; }
.rg-label { margin-left: -8px; text-align: center; line-height: 17px; color: #a0a0a0; letter-spacing: -.3px; }
.rg-org .rg-label { margin: 0 3px 0 -4px; }
.rg-new .rg-label { margin: 0 3px 0 -3px; }
.rg-open .rg-label { margin: 0 2px 0 -6px; }
.rg-sel .rg-label { margin: 0 2px 0 -7px; }
.big { display: flex; flex-direction: column; align-items: center; text-align: center; line-height: 13px; white-space: nowrap; }
.big-ic { height: 41px; display: flex; align-items: center; justify-content: center; }
.lit { color: #eee; }
.big-pin { width: 62px; }
.big-copy { width: 34px; margin-left: 6px; }
.big-paste { width: 34px; margin-left: 8px; }
.big-move { width: 40px; }
.big-move .ic-28 { margin-left: 8px; }
.big-copyto { width: 40px; margin-left: 2px; }
.big-copyto .ic-28 { margin-left: 6px; }
.big-del { width: 36px; }
.big-ren { width: 40px; margin-left: 6px; }
.big-nf { width: 40px; }
.big-prop { width: 52px; }
.rg-inner-sep { width: 1px; height: 55px; margin: 13px 5px 0 6px; background: #3c3c3c; }
.ic-pin { width: 22px; height: 22px; fill: #8a8a8a; }
.spin { width: 12px; height: 12px; fill: #888; margin: 0 4px 0 auto; }
.ic-28 { width: 28px; height: 28px; }
.ic-del { width: 24px; height: 24px; }
.ic-ren { width: 28px; height: 28px; }
.ic-nf { width: 18px; height: 28px; }
.ic-prop { width: 21px; height: 28px; }
.smalls { display: flex; flex-direction: column; padding-top: 2px; }
.smalls-clip { margin-left: 10px; }
.smalls-new { margin-left: 5px; letter-spacing: -.7px; }
.smalls-open { margin-left: 5px; }
.small { height: 22px; display: flex; align-items: center; white-space: nowrap; }
.small-lit { color: #eee; }
.ic14 { width: 14px; height: 14px; margin-right: 3px; }
.ic15 { width: 15px; height: 15px; margin-right: 4px; }
.ic-hist { width: 17px; height: 16px; margin-right: 3px; }
.smalls-sel .ic16 { margin-right: 3px; }
.smalls-open .ic15 { margin: 0 5px 0 2px; }
.caret { display: inline-block; width: 0; height: 0; margin: 0 0 2px 2px; border: 3px solid transparent; border-top-color: #eee; border-bottom-width: 0; vertical-align: middle; }
.caret-dim { border-top-color: #666; }

/* address row */
.addrrow { height: 37px; flex: none; display: flex; align-items: center; background: #191919; padding: 0 0 1px 12px; }
.nav-back { width: 14px; height: 12px; }
.nav-fwd { width: 14px; height: 12px; margin-left: 16px; }
.nav-drop { width: 8px; height: 6px; margin-left: 11px; }
.nav-up { width: 12px; height: 14px; margin-left: 13px; }
.addr { width: 650px; height: 21px; margin-left: 6px; display: flex; border: 1px solid #7f7f7f; }
.addr-fill { width: 475px; display: flex; align-items: center; padding-left: 2px; background: #0f6323; color: #f0f0f0; }
.crumb-sep { width: 0; height: 0; margin: 0 10px 0 7px; border: 4px solid transparent; border-left-color: #7a9a80; border-right-width: 0; }
.crumb-sep + .crumb { margin-right: 2px; }
.addr-rest { flex: 1; background: #858585; }
.addr-x { width: 20px; display: flex; align-items: center; justify-content: center; background: #6f6f6f; }
.addr-x-ic { width: 12px; height: 12px; }
.search { width: 180px; height: 21px; margin-left: 10px; display: flex; align-items: center; justify-content: space-between; padding: 0 8px; border: 1px solid #505050; color: #6e6e6e; }
.search-ic { width: 12px; height: 12px; }

/* main */
.main { flex: 1; min-height: 0; display: flex; }
.side { width: 154px; flex: none; padding-top: 15px; overflow: hidden; background: #191919; border-right: 1px solid #111; }
.sgroup { margin-bottom: 8px; }
.srow { height: 24px; display: flex; align-items: center; padding-left: 24px; white-space: nowrap; }
.srow-c { padding-left: 33px; }
.srow-sel { height: 22px; margin: 1px 2px 1px 1px; padding-left: 32px; background: #333; }
.srow-sel .spin { margin-right: 2px; }
.sic-root { width: 16px; height: 16px; margin-right: 5px; }
.sic { width: 16px; height: 16px; margin-right: 4px; }

.list { flex: 1; min-width: 0; overflow: hidden; background: #202020; }
.lhead { height: 30px; display: flex; align-items: flex-start; }
.lh { height: 24px; line-height: 24px; border-right: 1px solid #4d4d4d; position: relative; }
.lh-name { width: 273px; padding-left: 19px; }
.lh-date { width: 145px; padding-left: 7px; }
.lh-type { width: 119px; padding-left: 6px; }
.lh-size { width: 80px; padding-left: 7px; }
.sort { position: absolute; left: 139px; top: -1px; width: 9px; height: 5px; }
.row { height: 21px; display: grid; grid-template-columns: 18px 240px 144px 118px 68px; align-items: center; padding-left: 22px; white-space: nowrap; }
.row > span:nth-of-type(1) { letter-spacing: -.36px; }
.row > span:nth-of-type(2) { letter-spacing: -.58px; }
.row > span:nth-of-type(4) { text-align: right; letter-spacing: -.52px; }
.ric { width: 14px; height: 18px; }
.ric-app { width: 16px; height: 16px; margin-left: -1px; }

.scroll { width: 17px; flex: none; display: flex; flex-direction: column; align-items: center; background: #171717; }
.scroll-arrow { width: 9px; height: 7px; margin: 5px 0 4px; }
.scroll-arrow-end { margin: auto 0 5px; }
.thumb { width: 100%; height: 477px; background: #4d4d4d; }

.status { height: 24px; flex: none; display: flex; align-items: center; padding-left: 14px; background: #333; color: #ddd; }
.status-bar { width: 1px; height: 12px; margin-left: 10px; background: #ddd; }
.view-btns { margin-left: auto; margin-right: 4px; display: flex; align-items: center; }
.view-btn { width: 22px; height: 23px; display: flex; align-items: center; justify-content: center; }
.view-btn-on { background: #4d4d4d; border: 1px solid #777; }
.view-ic { width: 16px; height: 16px; }
.view-pic { width: 14px; height: 11px; }

/* dialogs */
.dlg { position: absolute; display: flex; flex-direction: column; background: #fff; color: #1e1e1e; white-space: nowrap; }
.dlg p { margin: 0; line-height: 15px; letter-spacing: -.3px; }
.dlg-loc { left: 661px; top: 367px; width: 556px; height: 161px; }
.dlg-loc-title { height: 29px; flex: none; display: flex; align-items: center; justify-content: space-between; padding: 0 9px 0 8px; color: #999; }
.x12 { width: 11px; height: 11px; }
.dlg-loc-body { flex: 1; display: flex; padding: 16px 0 0 11px; }
.dlg-loc-body p { margin: 0 0 0 11px; }
.err { width: 30px; height: 30px; }
.dlg-foot { flex: none; display: flex; align-items: center; background: #f0f0f0; border-top: 1px solid #dfdfdf; padding-bottom: 2px; }
.dlg-loc-foot { height: 41px; justify-content: flex-end; padding-right: 11px; }
.btn { width: 66px; height: 21px; background: #e1e1e1; border: 1px solid #adadad; text-align: center; line-height: 19px; color: #111; }
.btn-focus { border: 2px solid #0078d7; line-height: 17px; }
.btn-wide { width: 83px; margin-left: 8px; }
.btn-dots { display: block; height: 100%; outline: 1px dotted #111; outline-offset: -1px; line-height: 17px; }
.dlg-net { left: 691px; top: 572px; width: 518px; height: 163px; }
.dlg-net-title { height: 31px; flex: none; display: flex; align-items: center; justify-content: space-between; padding: 0 10px 0 8px; background: #3b3b3b; color: #f0f0f0; }
.dlg-net-body { flex: 1; padding: 11px 0 0 10px; }
.dlg-net-body h2 { margin: 0 0 14px; font-size: 16px; line-height: 21px; font-weight: 400; letter-spacing: -.43px; color: #003399; }
.dlg-net-foot { height: 41px; padding: 0 11px 2px 10px; }
.details-ic { width: 20px; height: 20px; }
.details { margin: 0 auto 0 7px; }
.taskstrip { position: absolute; left: 0; top: 1020px; width: 100%; height: 2px; background: #222; }
.taskstrip i { width: 36px; height: 2px; margin-left: 26px; background: #555; }
```
